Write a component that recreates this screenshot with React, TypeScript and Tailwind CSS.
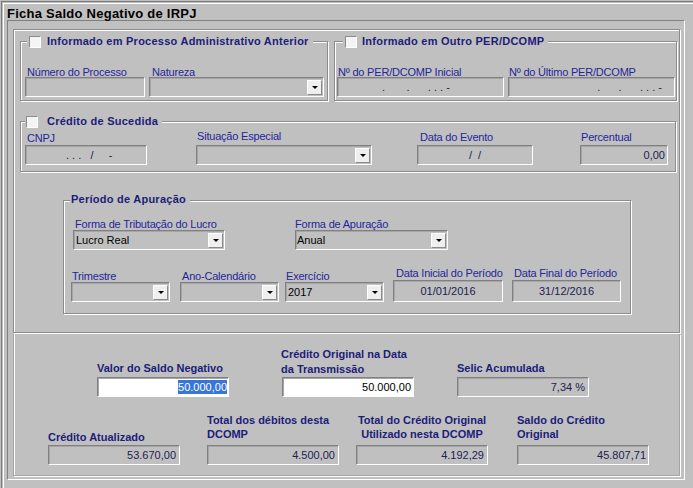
import React from 'react';

const L = 'h-[11px] leading-[12px] text-[11px] tracking-[-0.2px] text-[#25259a]';
const LB = 'h-[11px] leading-[12px] text-[11px] font-bold text-[#1c1c7a]';
const LB2 = 'text-[11px] font-bold text-[#1c1c7a]';
const ETCHED = 'border border-[#8c8c8c] shadow-[1px_1px_0_#ffffff,inset_1px_1px_0_#ffffff]';
const VAL = 'text-[#202050]';

function Field({ label, col, lbl, children }: { label: React.ReactNode; col: string; lbl: string; children: React.ReactNode }) {
  return (
    <div className={`flex flex-col shrink-0 ${col}`}>
      <div className={`whitespace-nowrap ${lbl}`}>{label}</div>
      {children}
    </div>
  );
}

function Box({ className = '', children }: { className?: string; children?: React.ReactNode }) {
  return (
    <div
      className={`flex items-center border border-t-[#808080] border-l-[#808080] border-b-white border-r-white shadow-[inset_1px_1px_0_#a6a6a6] text-[11px] leading-[13px] whitespace-pre ${className}`}
    >
      {children}
    </div>
  );
}

const Drop = () => (
  <span className="w-[15px] h-[15px] bg-[#efefef] border border-t-white border-l-white border-b-[#8a8a8a] border-r-[#8a8a8a] flex items-center justify-center">
    <svg width="6" height="3" viewBox="0 0 6 3">
      <path d="M0 0h6L3 3z" fill="#000" />
    </svg>
  </span>
);

function Select({ value = '', pad = 'pl-[2px]' }: { value?: string; pad?: string }) {
  return (
    <Box className={`w-full h-[20px] ${pad} pr-[1px] justify-between text-black`}>
      <span>{value}</span>
      <Drop />
    </Box>
  );
}

const Check = () => (
  <span className="w-[12px] h-[12px] bg-[#f4f4f4] border border-t-[#8c8c8c] border-l-[#8c8c8c] border-b-white border-r-white" />
);

function Legend({ className, check, children }: { className: string; check?: boolean; children: React.ReactNode }) {
  return (
    <div className={`h-[13px] w-fit flex items-center bg-[#c0c0c0] pr-[4px] ${className}`}>
      {check && <Check />}
      <span className="text-[11px] font-bold leading-[13px] tracking-[0.25px] text-[#1c1c7a] whitespace-nowrap">{children}</span>
    </div>
  );
}

export default function App() {
  return (
    <div className="w-[693px] h-[488px] overflow-hidden bg-[#c0c0c0] font-['Liberation_Sans',Arial,sans-serif] text-[11px]">
      <div className="h-full ml-[1px] mt-[1px] border-l border-t border-[#7a7a7a]">
        <div className="h-full ml-[1px] mt-[1px] border-l border-t border-white">
          <div className="h-[16px] pl-[3px] text-[13px] font-bold leading-[20px] tracking-[0.25px] text-black">Ficha Saldo Negativo de IRPJ</div>

          <div className="ml-[3px] w-[678px] h-[460px] border border-t-[#808080] border-l-[#808080] border-b-white border-r-white">
            {/* upper block */}
            <div className={`ml-[5px] mt-[8px] w-[667px] h-[304px] ${ETCHED}`}>
              <div className="flex mt-[11px] ml-[6px] gap-[6px]">
                <div className={`w-[308px] h-[60px] ${ETCHED}`}>
                  <Legend check className="-mt-[7px] ml-[6px] pl-[2px] gap-[6px]">Informado em Processo Administrativo Anterior</Legend>
                  <div className="flex items-end mt-[18px]">
                    <Field label="Número do Processo" col="ml-[4px] w-[120px]" lbl={`${L} pl-[2px]`}>
                      <Box className="w-full h-[20px]" />
                    </Field>
                    <Field label="Natureza" col="ml-[4px] w-[175px]" lbl={`${L} pl-[3px]`}>
                      <Select />
                    </Field>
                  </div>
                </div>
                <div className={`w-[343px] h-[60px] ${ETCHED}`}>
                  <Legend check className="-mt-[7px] ml-[8px] pl-[2px] gap-[5px]">Informado em Outro PER/DCOMP</Legend>
                  <div className="flex items-end mt-[18px]">
                    <Field label="Nº do PER/DCOMP Inicial" col="ml-[2px] w-[167px]" lbl={`${L} pl-[1px]`}>
                      <Box className={`w-full h-[20px] pl-[44px] ${VAL}`}>{'.       .      . . . -'}</Box>
                    </Field>
                    <Field label="Nº do Último PER/DCOMP" col="ml-[4px] w-[167px]" lbl={`${L} pl-[1px]`}>
                      <Box className={`w-full h-[20px] justify-end pr-[12px] ${VAL}`}>{'.      .      . . . -'}</Box>
                    </Field>
                  </div>
                </div>
              </div>

              <div className={`ml-[6px] mt-[20px] w-[656px] h-[51px] ${ETCHED}`}>
                <Legend check className="-mt-[7px] ml-[4px] pl-[1px] gap-[9px]">Crédito de Sucedida</Legend>
                <div className="flex items-end mt-[2px]">
                  <Field label="CNPJ" col="ml-[4px] w-[122px]" lbl={`${L} pl-[2px] mb-[2px]`}>
                    <Box className={`w-full h-[20px] pl-[40px] ${VAL}`}>{'. . .   /     -'}</Box>
                  </Field>
                  <Field label="Situação Especial" col="ml-[49px] w-[176px]" lbl={`${L} pl-[1px] mb-[4px]`}>
                    <Select />
                  </Field>
                  <Field label="Data do Evento" col="ml-[45px] w-[116px]" lbl={`${L} pl-[3px] mb-[3px]`}>
                    <Box className={`w-full h-[20px] justify-center ${VAL}`}>{'/  /'}</Box>
                  </Field>
                  <Field label="Percentual" col="ml-[47px] w-[88px]" lbl={`${L} pl-[1px] mb-[3px]`}>
                    <Box className={`w-full h-[20px] justify-end pr-[2px] ${VAL}`}>0,00</Box>
                  </Field>
                </div>
              </div>

              <div className={`ml-[49px] mt-[28px] w-[568px] h-[114px] ${ETCHED}`}>
                <Legend className="-mt-[8px] ml-[6px] pl-[1px] pr-[2px]">Período de Apuração</Legend>
                <div className="flex items-end mt-[12px]">
                  <Field label="Forma de Tributação do Lucro" col="ml-[9px] w-[152px]" lbl={`${L} pl-[2px] mb-[1px]`}>
                    <Select value="Lucro Real" />
                  </Field>
                  <Field label="Forma de Apuração" col="ml-[70px] w-[153px]" lbl={`${L} mb-[1px]`}>
                    <Select value="Anual" pad="pl-[1px]" />
                  </Field>
                </div>
                <div className="flex items-end mt-[17px]">
                  <Field label="Trimestre" col="ml-[7px] w-[99px]" lbl={`${L} pl-[1px] mb-[1px]`}>
                    <Select />
                  </Field>
                  <Field label="Ano-Calendário" col="ml-[10px] w-[99px]" lbl={`${L} pl-[2px] mb-[1px]`}>
                    <Select />
                  </Field>
                  <Field label="Exercício" col="ml-[6px] w-[99px]" lbl={`${L} pl-[1px] mb-[1px]`}>
                    <Select value="2017" />
                  </Field>
                  <Field label="Data Inicial do Período" col="ml-[9px] w-[110px]" lbl={`${L} pl-[3px] mb-[2px]`}>
                    <Box className={`w-full h-[22px] justify-center ${VAL}`}>01/01/2016</Box>
                  </Field>
                  <Field label="Data Final do Período" col="ml-[9px] w-[109px]" lbl={`${L} pl-[2px] mb-[2px]`}>
                    <Box className={`w-full h-[22px] justify-center ${VAL}`}>31/12/2016</Box>
                  </Field>
                </div>
              </div>
            </div>

            {/* lower block */}
            <div className="ml-[5px] mt-[1px] pt-[3px] w-[667px] h-[142px] border border-t-0 border-[#a4a4a4] shadow-[1px_1px_0_#ffffff,inset_1px_0_0_#ffffff]">
              <div className="flex items-end mt-[10px]">
                <Field label="Valor do Saldo Negativo" col="ml-[83px] w-[132px]" lbl={`${LB} mb-[4px]`}>
                  <Box className="w-full h-[20px] bg-white justify-end pr-[1px]">
                    <span className="bg-[#3875d7] text-white leading-[14px]">50.000,00</span>
                  </Box>
                </Field>
                <Field
                  label={<>Crédito Original na Data<br />da Transmissão</>}
                  col="ml-[53px] w-[132px]"
                  lbl={`${LB2} leading-[15px] -ml-[1px]`}
                >
                  <Box className="w-full h-[20px] bg-white justify-end pr-[2px] text-black">50.000,00</Box>
                </Field>
                <Field label="Selic Acumulada" col="ml-[43px] w-[132px]" lbl={`${LB} mb-[4px]`}>
                  <Box className={`w-full h-[20px] justify-end pr-[3px] ${VAL}`}>7,34 %</Box>
                </Field>
              </div>
              <div className="flex items-end mt-[16px]">
                <Field label="Crédito Atualizado" col="ml-[34px] w-[132px]" lbl={`${LB} mb-[3px]`}>
                  <Box className={`w-full h-[20px] justify-end pr-[3px] ${VAL}`}>53.670,00</Box>
                </Field>
                <Field label={<>Total dos débitos desta<br />DCOMP</>} col="ml-[27px] w-[132px]" lbl={`${LB2} leading-[14px] mb-[4px]`}>
                  <Box className={`w-full h-[20px] justify-end pr-[3px] ${VAL}`}>4.500,00</Box>
                </Field>
                <Field
                  label={<>Total do Crédito Original<br />Utilizado nesta DCOMP</>}
                  col="ml-[17px] w-[132px]"
                  lbl={`${LB2} leading-[14px] mb-[4px] text-center`}
                >
                  <Box className={`w-full h-[20px] justify-end pr-[3px] ${VAL}`}>4.192,29</Box>
                </Field>
                <Field label={<>Saldo do Crédito<br />Original</>} col="ml-[29px] w-[132px]" lbl={`${LB2} leading-[14px] mb-[4px]`}>
                  <Box className={`w-full h-[20px] justify-end pr-[2px] ${VAL}`}>45.807,71</Box>
                </Field>
              </div>
            </div>
          </div>
        </div>
      </div>
    </div>
  );
}
